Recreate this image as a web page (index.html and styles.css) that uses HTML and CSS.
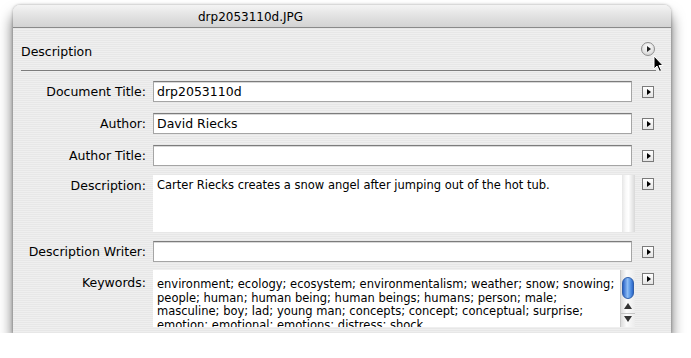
FILE: index.html
```html
<!DOCTYPE html>
<html lang="en">
<head>
    <meta charset="UTF-8">
    <title>drp2053110d.JPG</title>
    <link rel="stylesheet" href="styles.css">
</head>
<body>
    <div class="window">
        <div class="titlebar">drp2053110d.JPG</div>

        <div class="panel">
            <!-- Section header -->
            <div class="section-head">
                <span>Description</span>
                <span class="circle-btn"></span>
            </div>

            <div class="form">
                <div class="row">
                    <label>Document Title:</label>
                    <div class="field">drp2053110d</div>
                    <span class="menu-btn"></span>
                </div>
                <div class="row">
                    <label>Author:</label>
                    <div class="field">David Riecks</div>
                    <span class="menu-btn"></span>
                </div>
                <div class="row">
                    <label>Author Title:</label>
                    <div class="field"></div>
                    <span class="menu-btn"></span>
                </div>
                <div class="row tall">
                    <label>Description:</label>
                    <div class="area">
                        <div class="area-text">Carter Riecks creates a snow angel after jumping out of the hot tub.</div>
                        <div class="scroll-track"></div>
                    </div>
                    <span class="menu-btn"></span>
                </div>
                <div class="row after-tall">
                    <label>Description Writer:</label>
                    <div class="field"></div>
                    <span class="menu-btn"></span>
                </div>
                <div class="row tall keywords">
                    <label>Keywords:</label>
                    <div class="area">
                        <div class="area-text">environment; ecology; ecosystem; environmentalism; weather; snow; snowing;<br>people; human; human being; human beings; humans; person; male;<br>masculine; boy; lad; young man; concepts; concept; conceptual; surprise;<br>emotion; emotional; emotions; distress; shock</div>
                        <div class="scroll-bar">
                            <span class="thumb"></span>
                            <span class="arrow up"></span>
                            <span class="arrow down"></span>
                        </div>
                    </div>
                    <span class="menu-btn"></span>
                </div>
            </div>
        </div>
    </div>

    <!-- mouse pointer over the section button -->
    <svg class="cursor" width="12" height="18" viewBox="0 0 12 18">
        <path d="M1 1 L1 14 L4 11 L6.5 16.5 L8.5 15.5 L6 10.5 L10 10.5 Z" fill="#000" stroke="#fff" stroke-width="1"/>
    </svg>
</body>
</html>
```

FILE: styles.css
```css
body {
    margin: 0;
    background-color: #ffffff;
    font-family: 'DejaVu Sans', 'Liberation Sans', sans-serif;
    color: #000;
}

.window {
    margin: 5px 0 0 13px;
    width: 658px;
    height: 328px;
    border-radius: 7px 7px 0 0;
    overflow: hidden;
    background: repeating-linear-gradient(#efefef 0 1px, #e7e7e7 1px 2px);
    box-shadow: 0 10px 14px rgba(0, 0, 0, 0.6), 0 0 3px rgba(0, 0, 0, 0.35);
}

.titlebar {
    height: 22px;
    line-height: 24px;
    padding-left: 185px;
    font-size: 12px;
    background: linear-gradient(#f4f4f4, #e2e2e2 50%, #d3d3d3);
    border-bottom: 1px solid #8a8a8a;
}

.section-head {
    display: flex;
    align-items: center;
    justify-content: space-between;
    padding-top: 4px;
    box-sizing: border-box;
    height: 43px;
    margin: 0 15px 0 8px;
    font-size: 12.5px;
    border-bottom: 1px solid #7d7d7d;
}

.circle-btn {
    width: 12px;
    height: 12px;
    margin-right: 1px;
    margin-top: -4px;
    border: 1px solid #8e8e8e;
    border-radius: 50%;
    background: radial-gradient(circle at 50% 35%, #ffffff, #dcdcdc 70%, #c4c4c4);
    position: relative;
}

.circle-btn::after {
    content: '';
    position: absolute;
    left: 5px;
    top: 3px;
    border-left: 4px solid #222;
    border-top: 3px solid transparent;
    border-bottom: 3px solid transparent;
}

.form {
    display: flex;
    flex-direction: column;
    padding: 10px 16px 0 8px;
}

.row {
    display: grid;
    grid-template-columns: 125px 479px 12px;
    column-gap: 7px;
    align-items: center;
    font-size: 12.5px;
}

.row + .row {
    margin-top: 11px;
}

.row.tall,
.row.after-tall {
    margin-top: 9px;
}

.row.keywords {
    margin-top: 8px;
}

.row > .menu-btn {
    margin-left: 3px;
}

.row.tall {
    align-items: start;
}

.row label {
    text-align: right;
}

.row.tall label {
    padding-top: 3px;
}

.row.keywords label {
    padding-top: 5px;
}

.field {
    height: 19px;
    line-height: 19px;
    padding: 0 3px;
    background: #fff;
    border: 1px solid #a5a5a5;
    border-top-color: #7c7c7c;
    box-shadow: inset 0 1px 0 #d8d8d8;
}

.area {
    height: 57px;
    margin-right: -3px;
    display: flex;
    background: #fff;
    overflow: hidden;
}

.area-text {
    flex: 1;
    padding: 3px 4px;
    font-size: 11.5px;
    line-height: 15px;
    white-space: nowrap;
    overflow: hidden;
}

.keywords .area-text {
    line-height: 13.5px;
    padding-top: 8px;
}

.scroll-track {
    width: 13px;
    background: linear-gradient(to right, #e6e6e6, #fafafa 30%, #ffffff 50%, #d8d8d8);
}

.scroll-bar {
    width: 14px;
    position: relative;
    background: linear-gradient(to right, #dedede, #fbfbfb 40%, #ececec);
    border-left: 1px solid #c8c8c8;
}

.thumb {
    position: absolute;
    left: 1px;
    top: 7px;
    width: 12px;
    height: 22px;
    border-radius: 6px;
    border: 1px solid #2f5ea8;
    box-sizing: border-box;
    background: linear-gradient(to right, #2a63c8, #8ebdf5 45%, #5b99e8 70%, #2c66c9);
}

.arrow {
    position: absolute;
    left: 3px;
    border-left: 4px solid transparent;
    border-right: 4px solid transparent;
}

.arrow.up {
    top: 33px;
    border-bottom: 6px solid #333;
}

.arrow.down {
    top: 46px;
    border-top: 6px solid #333;
}

.arrow.down::before {
    content: '';
    position: absolute;
    left: -7px;
    top: -9px;
    width: 14px;
    border-top: 1px solid #c4c4c4;
}

.menu-btn {
    width: 10px;
    height: 10px;
    border: 1px solid #7a7a7a;
    background: linear-gradient(#ffffff, #e4e4e4);
    position: relative;
}

.row.tall .menu-btn {
    margin-top: 3px;
}

.menu-btn::after {
    content: '';
    position: absolute;
    left: 4px;
    top: 2px;
    border-left: 4px solid #000;
    border-top: 3px solid transparent;
    border-bottom: 3px solid transparent;
}

.cursor {
    position: absolute;
    left: 653px;
    top: 55px;
}
```
